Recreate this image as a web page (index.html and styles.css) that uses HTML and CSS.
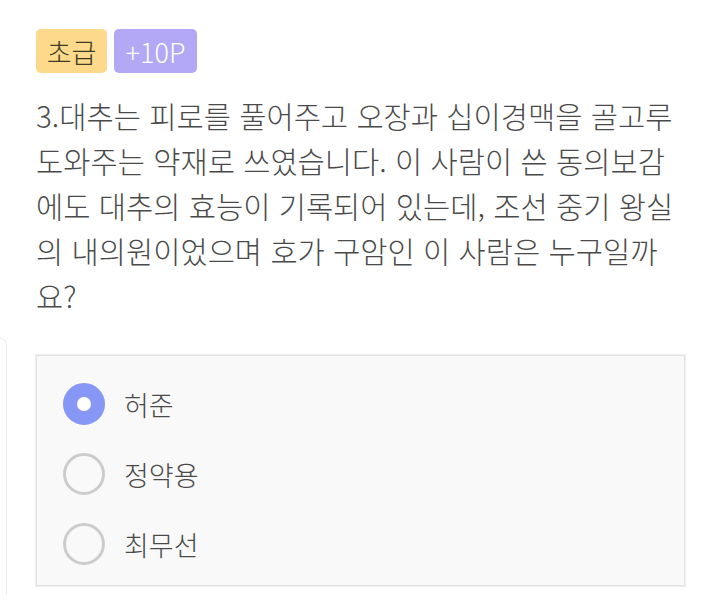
FILE: index.html
```html
<!DOCTYPE html>
<html lang="ko">
<head>
<meta charset="utf-8">
<link rel="stylesheet" href="styles.css">
</head>
<body>
<div class="page">
  <section class="quiz">
    <div class="badges">
      <span class="badge level">초급</span>
      <span class="badge point">+10P</span>
    </div>
    <p class="question">3.대추는 피로를 풀어주고 오장과 십이경맥을 골고루 도와주는 약재로 쓰였습니다. 이 사람이 쓴 동의보감에도 대추의 효능이 기록되어 있는데, 조선 중기 왕실의 내의원이었으며 호가 구암인 이 사람은 누구일까요?</p>
  </section>
  <div class="answer-row">
    <div class="ghost-card"></div>
    <div class="options">
      <label class="option"><span class="radio checked"></span><span class="opt-text">허준</span></label>
      <label class="option"><span class="radio"></span><span class="opt-text">정약용</span></label>
      <label class="option"><span class="radio"></span><span class="opt-text">최무선</span></label>
    </div>
  </div>
</div>
</body>
</html>
```

FILE: styles.css
```css
html, body {
  margin: 0;
  padding: 0;
  background: #ffffff;
}
body {
  font-family: "Noto Sans CJK KR", "Noto Sans", sans-serif;
  font-weight: 300;
  color: #4a4a4a;
  width: 720px;
  height: 600px;
  overflow: hidden;
}
.page {
  display: flex;
  flex-direction: column;
}
.quiz {
  padding: 29px 36px 0 36px;
}
.badges {
  display: flex;
  gap: 7px;
}
.badge {
  display: flex;
  align-items: center;
  justify-content: center;
  height: 44px;
  border-radius: 5px;
  font-size: 27px;
  font-weight: 300;
  box-sizing: border-box;
}
.level {
  background: #fdda8b;
  color: #3f3a26;
  width: 71px;
}
.point {
  background: #b2a8f6;
  color: #ffffff;
  width: 83px;
}
.question {
  margin: 20px 0 0 0;
  font-size: 29.6px;
  line-height: 45px;
  color: #4a4a4a;
  width: 648px;
  word-break: normal;
}
.answer-row {
  display: flex;
  margin-top: 20px;
}
.ghost-card {
  width: 6px;
  height: 256px;
  border: 1px solid #ececec;
  border-left: none;
  border-bottom: none;
  border-radius: 0 9px 0 0;
  flex: none;
}
.options {
  margin-left: 29px;
  margin-top: 17px;
  width: 649px;
  height: 231px;
  box-sizing: border-box;
  background: #f9f9f9;
  border: 1px solid #e2e2e2;
  box-shadow: 0 0 1px 1px #f0f0f0;
  padding: 27px 0 0 26px;
  display: flex;
  flex-direction: column;
  gap: 28px;
}
.option {
  display: flex;
  align-items: center;
  gap: 19px;
  height: 42px;
}
.radio {
  width: 42px;
  height: 42px;
  box-sizing: border-box;
  border-radius: 50%;
  border: 3px solid #cccccc;
  background: transparent;
  flex: none;
}
.radio.checked {
  border: 14px solid #8797f5;
  background: #ffffff;
}
.opt-text {
  font-size: 27px;
  color: #4a4a4a;
}
```
